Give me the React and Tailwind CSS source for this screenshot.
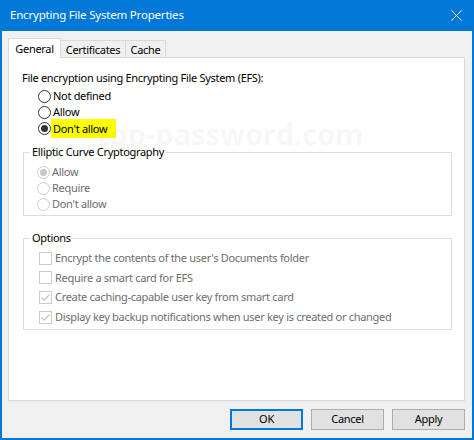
import React from "react";

const F = "font-['Noto_Sans',sans-serif]";

function Radio({ checked, disabled, label, highlight }) {
  const ring = disabled ? "border-[#cccccc]" : "border-[#333333]";
  const dot = disabled ? "bg-[#c6c6c6]" : "bg-[#333333]";
  const txt = disabled ? "text-[#6d6d6d]" : "text-[#000000]";
  return (
    <div className="flex items-center h-[16px] ml-[29px]">
      <span className={`w-[13px] h-[13px] rounded-full border ${ring} bg-white flex items-center justify-center shrink-0`}>
        {checked && <span className={`w-[7px] h-[7px] rounded-full ${dot}`} />}
      </span>
      {highlight ? (
        <span className={`h-[19px] w-[65px] pl-[2px] bg-[#ffff00] leading-[19px] ${txt}`}>{label}</span>
      ) : (
        <span className={`ml-[2px] leading-[16px] ${txt}`}>{label}</span>
      )}
    </div>
  );
}

function Check({ checked, label, h }) {
  return (
    <div className={`flex items-center ${h} ml-[9px]`}>
      <span className="w-[13px] h-[13px] border border-[#cccccc] bg-white flex items-center justify-center shrink-0">
        {checked && (
          <svg width="11" height="11" viewBox="0 0 11 11">
            <path d="M1.5 5.5 L4.2 8.2 L9.5 2.5" fill="none" stroke="#c4c4c4" strokeWidth="1.2" />
          </svg>
        )}
      </span>
      <span className="ml-[3px] text-[#6d6d6d] leading-[16px]">{label}</span>
    </div>
  );
}

function Button({ children, primary }) {
  return (
    <div
      className={`w-[73px] h-[21px] flex items-center justify-center bg-[#e1e1e1] text-black ${
        primary ? "border-2 border-[#0078d7]" : "border border-[#adadad]"
      }`}
    >
      {children}
    </div>
  );
}

export default function App() {
  return (
    <div className={`w-[474px] h-[440px] flex flex-col bg-[#0078d7] ${F} text-[11px] tracking-[-0.3px] text-black`}>
      {/* title bar */}
      <div className="h-[31px] shrink-0 flex items-center justify-between pl-[10px] pr-[12px] text-white">
        <span className="text-[11.5px] tracking-[-0.2px] leading-[16px] -mt-[1px]">Encrypting File System Properties</span>
        <svg width="11" height="11" viewBox="0 0 11 11" className="-mt-[1px]">
          <path d="M0.5 0.5 L10.5 10.5 M10.5 0.5 L0.5 10.5" stroke="white" strokeWidth="1" />
        </svg>
      </div>

      {/* body */}
      <div className="mx-[2px] mb-[2px] h-[407px] bg-[#f0f0f0] pl-[6px] pr-[7px] pt-[7px] flex flex-col">
        {/* tabs */}
        <div className="h-[19px] flex items-end relative z-10">
          <div className="w-[53px] h-[20px] -mb-[1px] bg-white border-l border-t border-r border-[#d9d9d9] flex items-center justify-center leading-[16px]">
            General
          </div>
          <div className="w-[65px] h-[17px] border-t border-r border-[#d9d9d9] flex items-center justify-center leading-[16px] pt-[1px]">
            Certificates
          </div>
          <div className="w-[40px] h-[17px] border-t border-r border-[#d9d9d9] flex items-center justify-center leading-[16px] pt-[1px]">
            Cache
          </div>
        </div>

        {/* panel */}
        <div className="relative w-[457px] h-[344px] bg-white border border-[#d9d9d9] pt-[12px]">
          <div className="ml-[13px] leading-[16px]">File encryption using Encrypting File System (EFS):</div>
          <div className="mt-[2px]">
            <Radio label="Not defined" />
            <Radio label="Allow" />
            <Radio label="Don't allow" checked highlight />
          </div>

          <fieldset className="mt-[8px] ml-[14px] w-[429px] border border-[#dcdcdc] pl-[6px] pt-[4px] pb-[3px]">
            <legend className="px-[2px] leading-[16px]">Elliptic Curve Cryptography</legend>
            <div className="-ml-[22px]">
              <Radio label="Allow" checked disabled />
              <Radio label="Require" disabled />
              <Radio label="Don't allow" disabled />
            </div>
          </fieldset>

          <fieldset className="mt-[14px] ml-[14px] w-[429px] border border-[#dcdcdc] pl-[6px] pt-[2px] pb-[2px]">
            <legend className="px-[2px] leading-[16px]">Options</legend>
            <div>
              <Check h="h-[20px]" label="Encrypt the contents of the user's Documents folder" />
              <Check h="h-[19px]" label="Require a smart card for EFS" />
              <Check h="h-[20px]" checked label="Create caching-capable user key from smart card" />
              <Check h="h-[20px]" checked label="Display key backup notifications when user key is created or changed" />
            </div>
          </fieldset>

          {/* watermark */}
          <div className="absolute left-[88px] top-[58px] pointer-events-none select-none text-[29px] tracking-normal font-bold text-[rgba(0,0,0,0.05)] leading-[36px]">
            top-password.com
          </div>
        </div>

        {/* buttons */}
        <div className="mt-[8px] flex justify-end gap-[8px]">
          <Button primary>OK</Button>
          <Button>Cancel</Button>
          <Button>Apply</Button>
        </div>
      </div>
    </div>
  );
}
